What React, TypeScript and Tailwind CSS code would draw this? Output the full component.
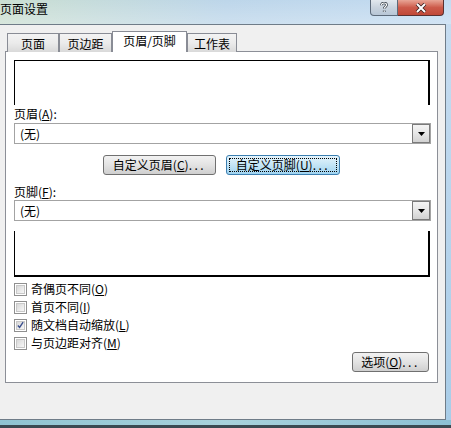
import React from "react";

const F = "font-['Noto_Sans_CJK_SC','Noto_Sans',sans-serif]";

function Dots() {
  return <span className="tracking-[2.5px]">...</span>;
}

function Tab({ label, w, selected }: { label: string; w: string; selected?: boolean }) {
  if (selected) {
    return (
      <div
        className={`relative z-10 ${w} h-[21px] border border-b-0 border-[#898c95] bg-white flex items-center justify-center text-[12px] leading-[14px] pb-[2px]`}
      >
        {label}
      </div>
    );
  }
  return (
    <div
      className={`${w} h-[19px] border border-b-0 border-[#898c95] bg-gradient-to-b from-[#f3f3f3] via-[#ebebeb] to-[#d9d9d9] flex items-center justify-center text-[12px] leading-[14px] pt-[1px]`}
    >
      {label}
    </div>
  );
}

function Select() {
  return (
    <div className="mt-[2px] w-[417px] h-[21px] border border-[#a3a3a3] bg-white flex items-center justify-between">
      <span className="pl-[5px] text-[12px] leading-[14px]">(无)</span>
      <div className="w-[18px] h-[19px] border border-[#7a7a7a] bg-gradient-to-b from-[#f4f4f4] via-[#e6e6e6] to-[#d2d2d2] flex items-center justify-center">
        <svg width="7" height="4" viewBox="0 0 7 4">
          <path d="M0 0H7L3.5 4Z" fill="#000" />
        </svg>
      </div>
    </div>
  );
}

function Check({ label, acc, checked }: { label: string; acc: string; checked?: boolean }) {
  return (
    <div className="h-[18px] flex items-center gap-[4px]">
      <div className="w-[13px] h-[13px] border border-[#8f8f8f] bg-white p-[1px]">
        <div className="w-full h-full border border-[#c8c8c8] bg-gradient-to-br from-[#d8d8d8] to-[#f7f7f7] flex items-center justify-center">
          {checked && (
            <svg width="8" height="8" viewBox="0 0 8 8">
              <path d="M1 4.5L3 6.8L7 0.8" stroke="#3a4f8e" strokeWidth="1.6" fill="none" />
            </svg>
          )}
        </div>
      </div>
      <span className="text-[12px] leading-[14px]">
        {label}(<u>{acc}</u>)
      </span>
    </div>
  );
}

export default function App() {
  return (
    <div
      className={`w-[451px] h-[428px] overflow-hidden flex flex-col bg-gradient-to-r from-[#cbdfd1] via-[#bdd6ea] to-[#c3dbf1] text-black ${F}`}
    >
      {/* Title bar */}
      <div className="h-[24px] flex justify-between bg-gradient-to-b from-transparent to-[#ffffff40]">
        <div className="pt-[2px] text-[12px] leading-[14px] text-black">页面设置</div>
        <div className="flex h-[16px] mr-[7px]">
          <div className="w-[28px] h-[16px] border border-[#5c6a7a] border-t-0 rounded-bl-[4px] bg-gradient-to-b from-[#e2e8ee] via-[#c9d3de] to-[#b7c6d6] flex items-center justify-center">
            <svg width="8" height="11" viewBox="0 0 8 11">
              <path d="M1.5 3.2C1.5 1.6 2.6 1 4 1C5.5 1 6.5 1.8 6.5 3C6.5 4.6 4.2 4.8 4.2 6.6M4.2 8.4V10" stroke="#2b3540" strokeWidth="2.6" fill="none" />
              <path d="M1.5 3.2C1.5 1.6 2.6 1 4 1C5.5 1 6.5 1.8 6.5 3C6.5 4.6 4.2 4.8 4.2 6.6M4.2 8.4V10" stroke="#fff" strokeWidth="1.2" fill="none" />
            </svg>
          </div>
          <div className="w-[46px] h-[16px] border border-[#5a3030] border-l-0 border-t-0 rounded-br-[4px] bg-gradient-to-b from-[#e8a596] via-[#cc5a4a] to-[#c04838] flex items-center justify-center">
            <svg width="12" height="10" viewBox="0 0 12 10">
              <path d="M2 1L10 9M10 1L2 9" stroke="#3a2020" strokeWidth="3.6" />
              <path d="M2 1L10 9M10 1L2 9" stroke="#fff" strokeWidth="2" />
            </svg>
          </div>
        </div>
      </div>

      {/* Body */}
      <div className="flex h-[396px]">
        <div className="w-[446px] h-[396px] border-t border-r border-b border-[#6f7c88] bg-[#f0f0f0] pl-[5px] pt-[6px]">
          {/* tabs */}
          <div className="h-[21px] flex items-end pl-[2px]">
            <Tab label="页面" w="w-[52px]" />
            <Tab label="页边距" w="w-[53px]" />
            <Tab label="页眉/页脚" w="w-[75px]" selected />
            <Tab label="工作表" w="w-[50px]" />
          </div>
          {/* panel */}
          <div className="-mt-[1px] w-[433px] h-[332px] border border-[#8c8f97] bg-white pl-[8px] pt-[8px] flex flex-col">
            <div className="w-[416px] h-[45px] border-t border-l border-r-2 border-black" />
            <div className="mt-[2px] h-[14px] text-[12px] leading-[14px]">
              页眉(<u>A</u>):
            </div>
            <Select />
            <div className="mt-[11px] flex pl-[89px] gap-[10px]">
              <div className="w-[113px] h-[20px] rounded-[3px] border border-[#707070] bg-gradient-to-b from-[#f2f2f2] via-[#e3e3e3] to-[#cfcfcf] flex items-center justify-center text-[12px] leading-[14px]">
                自定义页眉(<u>C</u>)<Dots />
              </div>
              <div className="w-[114px] h-[20px] rounded-[3px] border border-[#3c7fb1] bg-gradient-to-b from-[#e5f4fc] via-[#c4e5f6] to-[#9fd3f0] p-[2px]">
                <div className="w-full h-full border border-dotted border-black flex items-center justify-center text-[12px] leading-[14px]">
                  自定义页脚(<u>U</u>)<Dots />
                </div>
              </div>
            </div>
            <div className="mt-[10px] h-[14px] text-[12px] leading-[14px]">
              页脚(<u>F</u>):
            </div>
            <div className="-mt-[1px]" />
            <Select />
            <div className="mt-[10px] w-[416px] h-[46px] border-l border-r-2 border-b-2 border-black" />
            <div className="mt-[3px] flex flex-col">
              <Check label="奇偶页不同" acc="O" />
              <Check label="首页不同" acc="I" />
              <Check label="随文档自动缩放" acc="L" checked />
              <Check label="与页边距对齐" acc="M" />
            </div>
            <div className="self-end mr-[8px] w-[77px] h-[20px] rounded-[3px] border border-[#707070] bg-gradient-to-b from-[#f2f2f2] via-[#e3e3e3] to-[#cfcfcf] flex items-center justify-center text-[12px] leading-[14px]">
              选项(<u>O</u>)<Dots />
            </div>
          </div>
        </div>
        <div className="flex-1 bg-gradient-to-b from-[#c6dcf0] to-[#a9cde8]" />
      </div>
      {/* bottom glass */}
      <div className="flex-1 flex flex-col">
        <div className="h-[5px] bg-gradient-to-r from-[#8fc4d2] via-[#a8d2dc] to-[#8cc0d4]" />
        <div className="flex-1 bg-[#3a4a52]" />
      </div>
    </div>
  );
}
